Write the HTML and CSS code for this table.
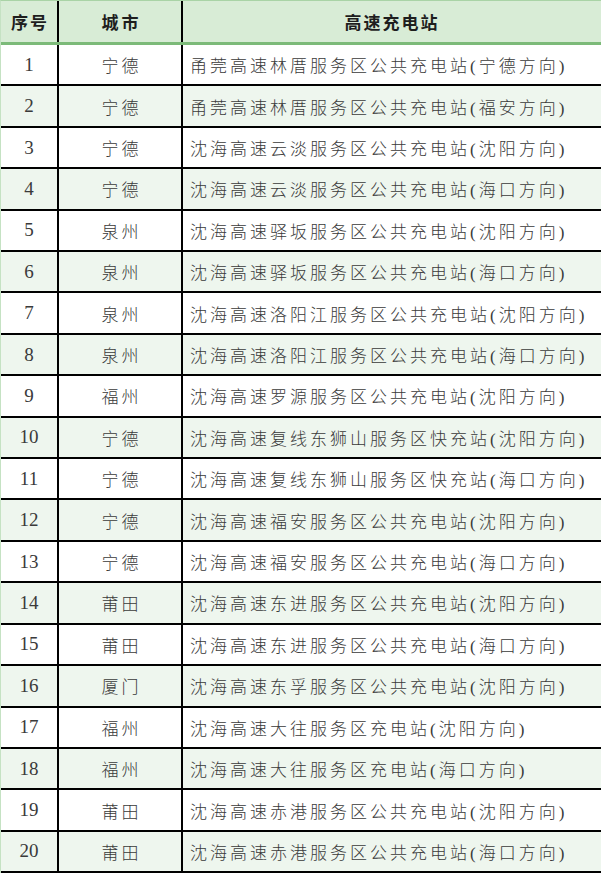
FILE: index.html
```html
<!DOCTYPE html>
<html lang="zh-CN">
<head>
<meta charset="utf-8">
<title>高速充电站</title>
<link rel="stylesheet" href="styles.css">
</head>
<body>
<div class="table">
  <div class="row head">
    <div class="c no">序号</div>
    <div class="c city">城市</div>
    <div class="c name center">高速充电站</div>
  </div>
  <div class="row"><div class="c no">1</div><div class="c city">宁德</div><div class="c name">甬莞高速林厝服务区公共充电站(宁德方向)</div></div>
  <div class="row alt"><div class="c no">2</div><div class="c city">宁德</div><div class="c name">甬莞高速林厝服务区公共充电站(福安方向)</div></div>
  <div class="row"><div class="c no">3</div><div class="c city">宁德</div><div class="c name">沈海高速云淡服务区公共充电站(沈阳方向)</div></div>
  <div class="row alt"><div class="c no">4</div><div class="c city">宁德</div><div class="c name">沈海高速云淡服务区公共充电站(海口方向)</div></div>
  <div class="row"><div class="c no">5</div><div class="c city">泉州</div><div class="c name">沈海高速驿坂服务区公共充电站(沈阳方向)</div></div>
  <div class="row alt"><div class="c no">6</div><div class="c city">泉州</div><div class="c name">沈海高速驿坂服务区公共充电站(海口方向)</div></div>
  <div class="row"><div class="c no">7</div><div class="c city">泉州</div><div class="c name">沈海高速洛阳江服务区公共充电站(沈阳方向)</div></div>
  <div class="row alt"><div class="c no">8</div><div class="c city">泉州</div><div class="c name">沈海高速洛阳江服务区公共充电站(海口方向)</div></div>
  <div class="row"><div class="c no">9</div><div class="c city">福州</div><div class="c name">沈海高速罗源服务区公共充电站(沈阳方向)</div></div>
  <div class="row alt"><div class="c no">10</div><div class="c city">宁德</div><div class="c name">沈海高速复线东狮山服务区快充站(沈阳方向)</div></div>
  <div class="row"><div class="c no">11</div><div class="c city">宁德</div><div class="c name">沈海高速复线东狮山服务区快充站(海口方向)</div></div>
  <div class="row alt"><div class="c no">12</div><div class="c city">宁德</div><div class="c name">沈海高速福安服务区公共充电站(沈阳方向)</div></div>
  <div class="row"><div class="c no">13</div><div class="c city">宁德</div><div class="c name">沈海高速福安服务区公共充电站(海口方向)</div></div>
  <div class="row alt"><div class="c no">14</div><div class="c city">莆田</div><div class="c name">沈海高速东进服务区公共充电站(沈阳方向)</div></div>
  <div class="row"><div class="c no">15</div><div class="c city">莆田</div><div class="c name">沈海高速东进服务区公共充电站(海口方向)</div></div>
  <div class="row alt"><div class="c no">16</div><div class="c city">厦门</div><div class="c name">沈海高速东孚服务区公共充电站(沈阳方向)</div></div>
  <div class="row"><div class="c no">17</div><div class="c city">福州</div><div class="c name">沈海高速大往服务区充电站(沈阳方向)</div></div>
  <div class="row alt"><div class="c no">18</div><div class="c city">福州</div><div class="c name">沈海高速大往服务区充电站(海口方向)</div></div>
  <div class="row"><div class="c no">19</div><div class="c city">莆田</div><div class="c name">沈海高速赤港服务区公共充电站(沈阳方向)</div></div>
  <div class="row alt"><div class="c no">20</div><div class="c city">莆田</div><div class="c name">沈海高速赤港服务区公共充电站(海口方向)</div></div>
</div>
</body>
</html>
```

FILE: styles.css
```css
* { box-sizing: border-box; }
html, body { margin: 0; padding: 0; background: #ffffff; }
body {
  width: 601px;
  height: 873px;
  overflow: hidden;
  font-family: "Liberation Serif", "Noto Sans CJK SC", serif;
  color: #3a3a3a;
}
.table {
  width: 601px;
  height: 873px;
  display: flex;
  flex-direction: column;
  border-top: 1px solid #a9d3a6;
  border-left: 1px solid #c5e2c3;
}
.row {
  flex: 1 1 0;
  display: flex;
  border-bottom: 2px solid #000;
  background: #ffffff;
  min-height: 0;
  font-weight: 300;
}
.row.alt { background: #eef6ee; }
.row.head {
  flex: 0 0 44px;
  background: #d8ecd6;
  border-bottom: 3px solid #7cba79;
  font-weight: bold;
  color: #1e1e1e;
}
.c {
  display: flex;
  align-items: center;
  font-size: 17px;
  letter-spacing: 3px;
}
.no {
  width: 58px;
  justify-content: center;
  border-right: 2px solid #000;
  font-size: 19px;
  letter-spacing: 0;
  font-weight: 400;
}
.head .no { font-size: 17px; letter-spacing: 2px; padding-left: 2px; font-weight: bold; }
.city {
  width: 124px;
  justify-content: center;
  border-right: 2px solid #000;
  padding-left: 3px;
}
.name {
  flex: 1;
  padding-left: 7px;
  white-space: nowrap;
}
.name.center { justify-content: center; padding-left: 0; letter-spacing: 2px; }
```
